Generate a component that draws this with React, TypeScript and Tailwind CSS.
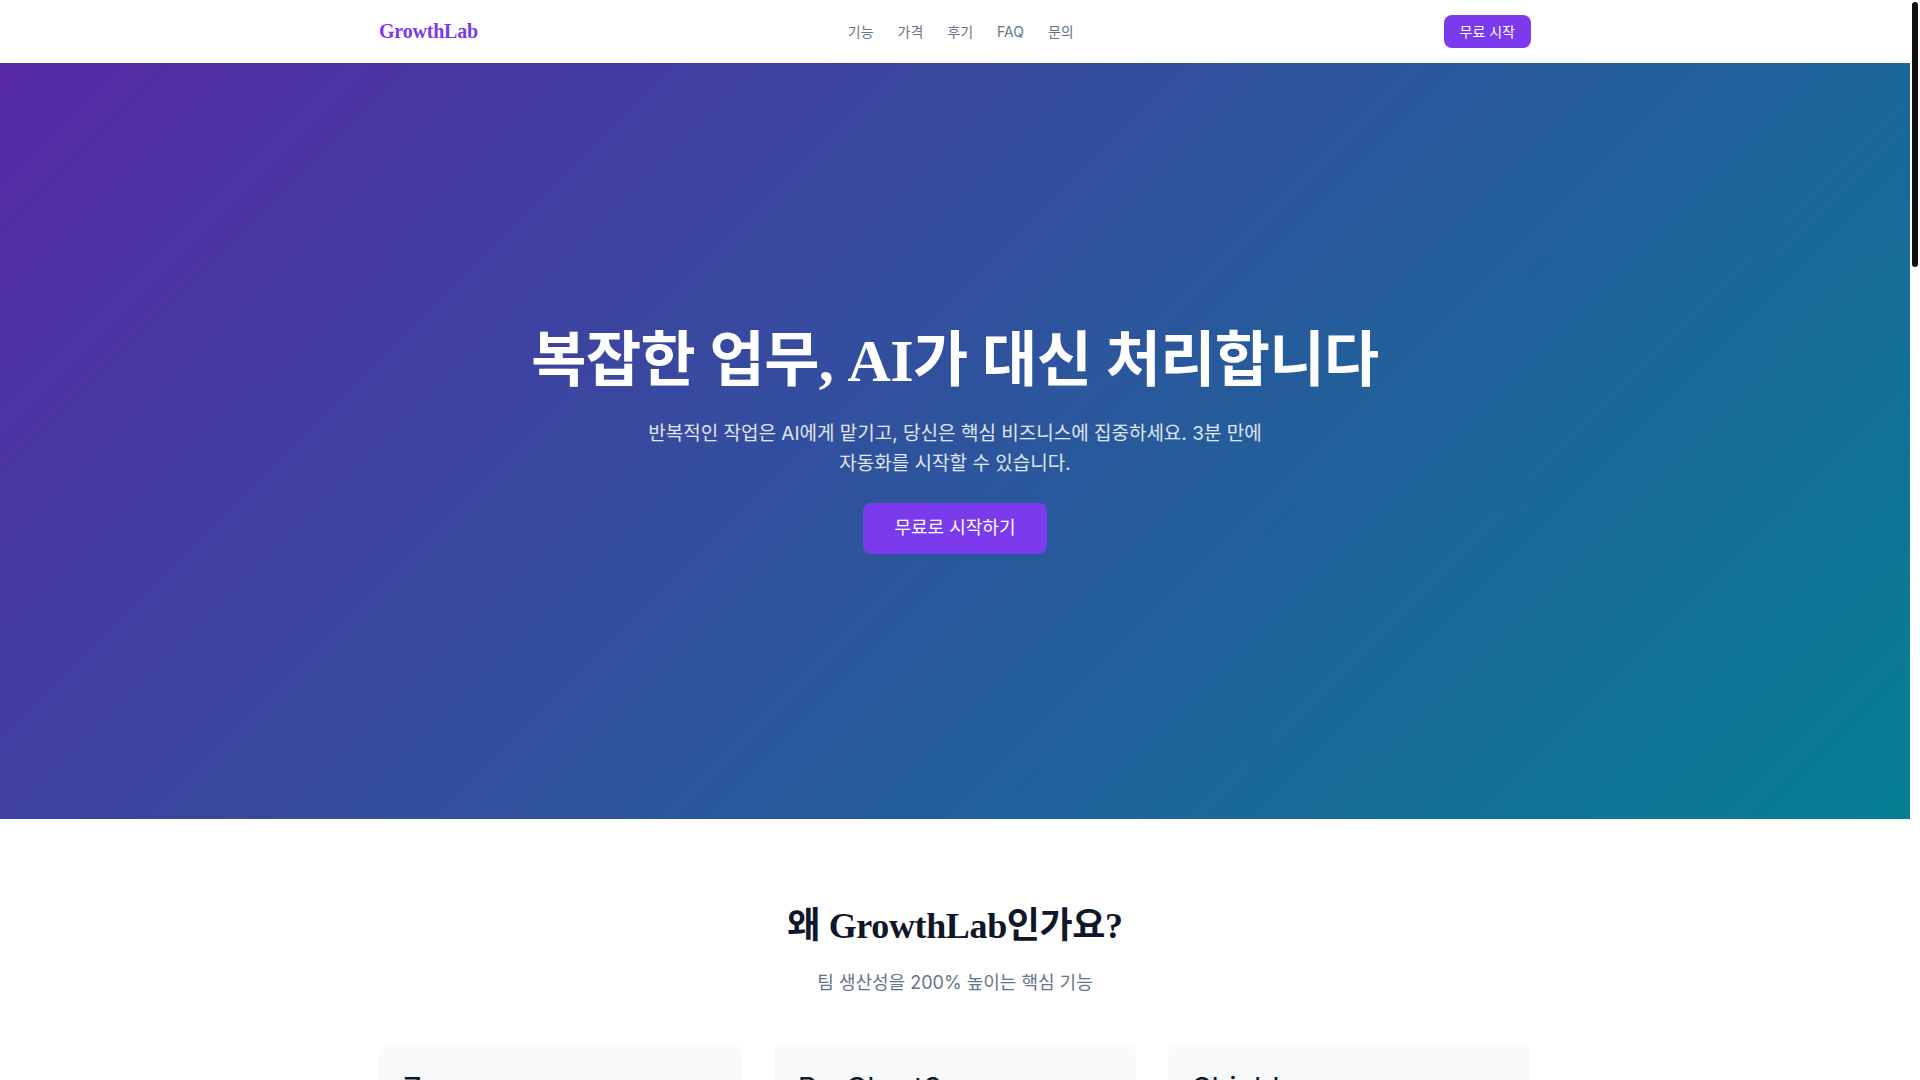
const navItems = [
  { href: '#features', label: '기능' },
  { href: '#pricing', label: '가격' },
  { href: '#reviews', label: '후기' },
  { href: '#faq', label: 'FAQ' },
  { href: '#contact', label: '문의' },
];

const features = [{ icon: 'Zap' }, { icon: 'BarChart3' }, { icon: 'Shield' }];

function Header() {
  return (
    <header className="bg-white">
      <div className="mx-auto flex h-[63px] max-w-6xl items-center justify-between">
        <a
          href="#top"
          className="pb-[2px] font-['Liberation_Serif','Noto_Sans_CJK_KR',serif] text-xl font-bold tracking-[-0.01em] text-[#7c3aed]"
        >
          GrowthLab
        </a>
        <nav className="flex items-center gap-6">
          {navItems.map((item) => (
            <a key={item.href} href={item.href} className="text-sm text-[#64748b]">
              {item.label}
            </a>
          ))}
        </nav>
        <button type="button" className="h-[33px] rounded-lg bg-[#7c3aed] px-4 text-sm text-white">
          무료 시작
        </button>
      </div>
    </header>
  );
}

function Hero() {
  return (
    <section className="flex min-h-[70vh] flex-col items-center justify-center bg-[linear-gradient(rgba(0,0,0,0.3),rgba(0,0,0,0.3)),linear-gradient(135deg,#7c3aed,#06b6d4)] px-6 pb-1 text-center">
      <h1 className="mb-[22px] font-['Liberation_Serif','Noto_Sans_CJK_KR',serif] text-6xl leading-[72px] font-bold tracking-[-0.01em] text-white">
        복잡한 업무, AI가 대신 처리합니다
      </h1>
      <p className="mb-6 max-w-[640px] text-[19px] leading-[30px] break-keep text-white/85">
        반복적인 작업은 AI에게 맡기고, 당신은 핵심 비즈니스에 집중하세요. 3분 만에 자동화를 시작할 수 있습니다.
      </p>
      <button type="button" className="h-[51px] rounded-lg bg-[#7c3aed] px-8 text-lg text-white">
        무료로 시작하기
      </button>
    </section>
  );
}

function Features() {
  return (
    <section id="features" className="bg-white py-20">
      <div className="mx-auto max-w-6xl">
        <h2 className="mb-4 text-center font-['Liberation_Serif','Noto_Sans_CJK_KR',serif] text-4xl leading-[54px] font-bold tracking-[-0.01em] text-[#0f172a]">
          왜 GrowthLab인가요?
        </h2>
        <p className="mb-12 text-center text-lg leading-[27px] text-[#64748b]">팀 생산성을 200% 높이는 핵심 기능</p>
        <div className="grid grid-cols-3 gap-8">
          {features.map((feature) => (
            <div key={feature.icon} className="rounded-xl bg-[#f8fafc] p-6 text-[#0f172a]">
              <div className="text-3xl leading-10">{feature.icon}</div>
            </div>
          ))}
        </div>
      </div>
    </section>
  );
}

export default function App() {
  return (
    <div className="flex h-screen overflow-hidden bg-white font-['Inter','Noto_Sans_CJK_KR',sans-serif]">
      <main className="min-w-0 flex-1">
        <Header />
        <Hero />
        <Features />
      </main>
      {/* scroll track */}
      <div className="w-[10px] shrink-0 bg-white p-[2px]">
        <div className="h-[265px] rounded-full bg-[#111111]" />
      </div>
    </div>
  );
}
